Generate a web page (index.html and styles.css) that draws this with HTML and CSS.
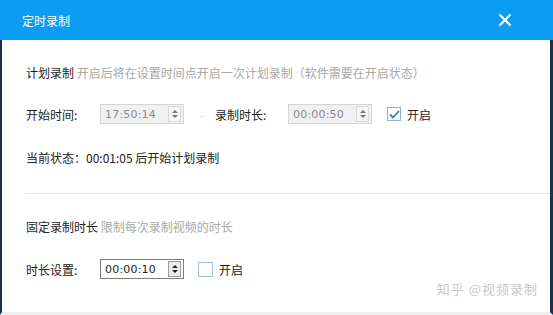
FILE: index.html
```html
<!DOCTYPE html>
<html lang="zh-CN">
<head>
    <meta charset="UTF-8">
    <title>定时录制</title>
    <link rel="stylesheet" href="styles.css">
</head>
<body>
    <div class="dialog">
        <div class="titlebar">
            <span class="title">定时录制</span>
            <svg class="close" width="14" height="14" viewBox="0 0 14 14">
                <path d="M1.5 1.5 L12.5 12.5 M12.5 1.5 L1.5 12.5" stroke="#fff" stroke-width="2.2" fill="none"/>
            </svg>
        </div>
        <div class="content">
            <div class="heading">计划录制 <span class="hint">开启后将在设置时间点开启一次计划录制（软件需要在开启状态）</span></div>
            <div class="row row-plan">
                <span class="label">开始时间:</span>
                <div class="spin disabled">
                    <span class="value">17:50:14</span>
                    <span class="arrows"><i class="up"></i><i class="down"></i></span>
                </div>
                <span class="dash">-</span>
                <span class="label label-mid">录制时长:</span>
                <div class="spin disabled">
                    <span class="value">00:00:50</span>
                    <span class="arrows"><i class="up"></i><i class="down"></i></span>
                </div>
                <span class="check checked">
                    <svg width="11" height="9" viewBox="0 0 11 9"><path d="M1 4.5 L4 7.5 L10 1" stroke="#2f7fc1" stroke-width="1.8" fill="none"/></svg>
                </span>
                <span class="check-label">开启</span>
            </div>
            <div class="status">当前状态：00:01:05 后开始计划录制</div>
            <div class="divider"></div>
            <div class="heading">固定录制时长 <span class="hint">限制每次录制视频的时长</span></div>
            <div class="row row-fixed">
                <span class="label">时长设置:</span>
                <div class="spin active">
                    <span class="value">00:00:10</span>
                    <span class="arrows"><i class="up"></i><i class="down"></i></span>
                </div>
                <span class="check"></span>
                <span class="check-label">开启</span>
            </div>
            <div class="watermark">知乎 @视频录制</div>
        </div>
    </div>
</body>
</html>
```

FILE: styles.css
```css
body {
    margin: 0;
    font-family: "Noto Sans CJK SC", "Liberation Sans", sans-serif;
    font-size: 12px;
    color: #222;
    background: #fff;
}
.dialog {
    width: 553px;
    height: 315px;
    overflow: hidden;
}
.titlebar {
    height: 40px;
    background: #0b9cf4;
    display: flex;
    align-items: center;
    justify-content: space-between;
    padding: 0 41px 0 22px;
}
.title {
    color: #fff;
    font-size: 12px;
}
.close {
    display: block;
}
.content {
    position: relative;
    height: 272px;
    border-left: 2px solid #17314b;
    border-right: 3px solid #17314b;
    border-bottom: 3px solid #eceef0;
    padding: 0 0 0 24px;
}
.heading {
    line-height: 20px;
    padding-top: 23px;
    color: #1e1e1e;
}
.hint {
    color: #a8a8a8;
}
.row {
    display: flex;
    align-items: center;
    height: 20px;
    margin-top: 21px;
}
.row-fixed {
    margin-top: 22px;
}
.label {
    width: 74px;
}
.label-mid {
    width: 73px;
}
.spin {
    width: 76px;
    height: 18px;
    display: flex;
    align-items: center;
    justify-content: space-between;
    padding: 0 2px 0 4px;
    box-sizing: content-box;
}
.spin.disabled {
    background: #f1f1f1;
    border: 1px solid #d6d6d6;
    color: #8a8a8a;
}
.spin.active {
    background: #fff;
    border: 1px solid #7d7d7d;
    color: #222;
}
.value {
    font-family: "DejaVu Sans", sans-serif;
    font-size: 11px;
    letter-spacing: 0.2px;
}
.arrows {
    width: 11px;
    height: 14px;
    display: flex;
    flex-direction: column;
    align-items: center;
    justify-content: center;
    gap: 2px;
    border: 1px solid #dadada;
    background: #f6f6f6;
}
.spin.active .arrows {
    border-color: #9a9a9a;
    background: #ececec;
}
.arrows i {
    width: 0;
    height: 0;
    border-left: 3px solid transparent;
    border-right: 3px solid transparent;
}
.arrows .up {
    border-bottom: 3px solid #777;
}
.arrows .down {
    border-top: 3px solid #777;
}
.spin.active .arrows .up {
    border-bottom-color: #222;
}
.spin.active .arrows .down {
    border-top-color: #222;
}
.dash {
    color: #e2e2e2;
    width: 31px;
    padding-left: 16px;
    box-sizing: border-box;
}
.check {
    width: 12px;
    height: 12px;
    border: 1px solid #8fb3cc;
    background: #fff;
    margin-left: 15px;
    display: flex;
    align-items: center;
    justify-content: center;
}
.row-fixed .check {
    width: 13px;
    height: 13px;
    margin-left: 14px;
    border-color: #9ec3d6;
}
.check-label {
    margin-left: 6px;
}
.status {
    line-height: 20px;
    margin-top: 24px;
}
.divider {
    height: 1px;
    background: #e6e6e6;
    margin: 25px 0 0 0;
}
.watermark {
    position: absolute;
    right: 12px;
    bottom: 14px;
    color: #c9c9c9;
    font-size: 13px;
    letter-spacing: 1px;
}
```
